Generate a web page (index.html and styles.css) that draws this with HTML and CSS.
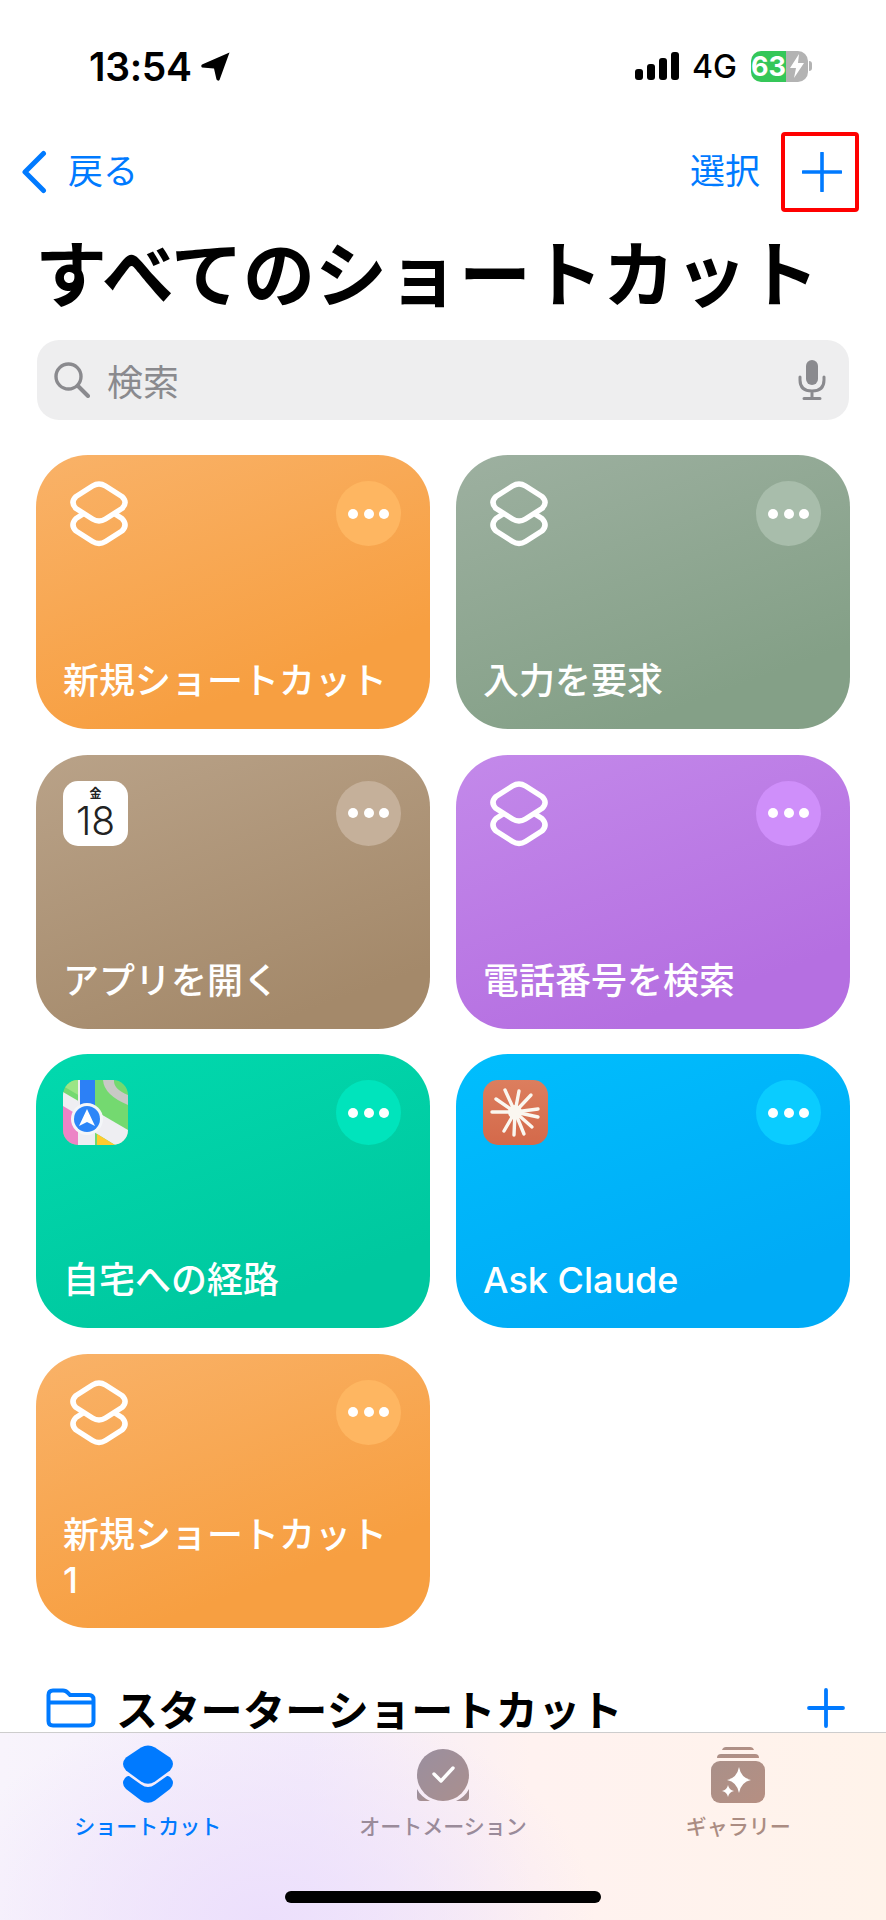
FILE: index.html
```html
<!DOCTYPE html>
<html lang="ja">
<head>
    <meta charset="UTF-8">
    <meta name="viewport" content="width=device-width, initial-scale=1.0">
    <title>すべてのショートカット</title>
    <link rel="stylesheet" href="styles.css">
</head>
<body>
    <svg class="sprites" width="0" height="0">
        <symbol id="stack" viewBox="0 0 58 66">
            <path d="M22.5 5 Q29 1 35.5 5 L52 15.5 Q58 21.5 52 27.5 L35.5 38 Q29 42 22.5 38 L6 27.5 Q0 21.5 6 15.5 Z" fill="none" stroke="#fff" stroke-width="5.4"/>
            <path d="M13 33 L6 37.5 Q0 44 6 50 L22.5 60.5 Q29 64.5 35.5 60.5 L52 50 Q58 44 52 37.5 L45 33" fill="none" stroke="#fff" stroke-width="5.4"/>
        </symbol>
    </svg>

    <div class="status-bar">
        <div class="status-left">
            <span class="clock">13:54</span>
            <svg class="location" viewBox="0 0 29 29"><path d="M28.5 0.5 L18.5 28 Q17 29.5 15.5 27.5 L13 16.5 L1 15.5 Q-0.5 14 1 12.5 Z" fill="#000"/></svg>
        </div>
        <div class="status-right">
            <div class="signal"><i class="bar-1"></i><i class="bar-2"></i><i class="bar-3"></i><i class="bar-4"></i></div>
            <span class="network">4G</span>
            <div class="battery">
                <div class="battery-level">63</div>
                <div class="battery-rest">
                    <svg class="bolt" viewBox="0 0 14 24"><path d="M9 0 L0 14 L6 14 L4 24 L14 9 L8 9 Z" fill="#fff"/></svg>
                </div>
            </div>
            <div class="battery-nub"></div>
        </div>
    </div>

    <div class="nav-bar">
        <a class="back-link">
            <svg class="chevron" viewBox="0 0 26 44"><path d="M22.5 3.5 L4 22 L22.5 40.5" fill="none" stroke="#007aff" stroke-width="5" stroke-linecap="round" stroke-linejoin="round"/></svg>
            <span class="nav-text">戻る</span>
        </a>
        <div class="nav-actions">
            <a class="nav-text">選択</a>
            <div class="add-box">
                <svg class="plus" viewBox="0 0 40 40"><path d="M20 1 V39 M1 20 H39" fill="none" stroke="#007aff" stroke-width="3.6" stroke-linecap="round"/></svg>
            </div>
        </div>
    </div>

    <h1 class="page-title">すべてのショートカット</h1>

    <div class="search-bar">
        <svg class="search-icon" viewBox="0 0 36 36"><circle cx="14.5" cy="14.5" r="12.5" fill="none" stroke="#8a8a8e" stroke-width="3.4"/><path d="M24 24 L34 34" stroke="#8a8a8e" stroke-width="4" stroke-linecap="round"/></svg>
        <span class="search-text">検索</span>
        <svg class="mic-icon" viewBox="0 0 28 40"><rect x="8" y="0" width="12" height="25" rx="6" fill="#8a8a8e"/><path d="M2 17 V20 Q2 31 14 31 Q26 31 26 20 V17 M14 31 V38 M6 38.5 H22" fill="none" stroke="#8a8a8e" stroke-width="3" stroke-linecap="round"/></svg>
    </div>

    <div class="shortcut-grid">
        <div class="card card-orange">
            <div class="card-top">
                <svg class="card-icon"><use href="#stack"/></svg>
                <div class="more-btn"><i></i><i></i><i></i></div>
            </div>
            <div class="card-name">新規ショートカット</div>
        </div>
        <div class="card card-green">
            <div class="card-top">
                <svg class="card-icon"><use href="#stack"/></svg>
                <div class="more-btn"><i></i><i></i><i></i></div>
            </div>
            <div class="card-name">入力を要求</div>
        </div>
        <div class="card card-brown">
            <div class="card-top">
                <div class="app-icon calendar">
                    <span class="cal-day">金</span>
                    <span class="cal-date">18</span>
                </div>
                <div class="more-btn"><i></i><i></i><i></i></div>
            </div>
            <div class="card-name">アプリを開く</div>
        </div>
        <div class="card card-purple">
            <div class="card-top">
                <svg class="card-icon"><use href="#stack"/></svg>
                <div class="more-btn"><i></i><i></i><i></i></div>
            </div>
            <div class="card-name">電話番号を検索</div>
        </div>
        <div class="card card-teal">
            <div class="card-top">
                <svg class="app-icon" viewBox="0 0 65 65">
                    <rect width="65" height="65" fill="#74d970"/>
                    <path d="M0 0 H17 V16 L0 6 Z" fill="#9be585"/>
                    <path d="M40 0 Q41 15 65 25 V15 Q50 9 51 0 Z" fill="#c9c9c6"/>
                    <path d="M0 12 L65 50 V64 L52 65 L0 33 Z" fill="#eeeef2"/>
                    <path d="M0 26 L15 35 V65 H0 Z" fill="#ec84c6"/>
                    <rect x="15" y="0" width="17" height="65" fill="#eeeef2"/>
                    <path d="M34 54 L52 65 H34 Z" fill="#ffcb2e"/>
                    <rect x="17" y="0" width="15" height="30" fill="#2c80f6"/>
                    <circle cx="24" cy="39" r="16" fill="#f4f6f8"/>
                    <circle cx="24" cy="39" r="13" fill="#2c86f8"/>
                    <path d="M24 29 L32 46 L24 42 L16 46 Z" fill="#fff"/>
                </svg>
                <div class="more-btn"><i></i><i></i><i></i></div>
            </div>
            <div class="card-name">自宅への経路</div>
        </div>
        <div class="card card-blue">
            <div class="card-top">
                <svg class="app-icon claude" viewBox="0 0 65 65">
                    <g stroke="#faf7f0" stroke-width="3.4" stroke-linecap="round">
                        <path d="M32 32 L22 10"/>
                        <path d="M32 32 L36 11"/>
                        <path d="M32 32 L48 15"/>
                        <path d="M32 32 L55 29"/>
                        <path d="M32 32 L55 37"/>
                        <path d="M32 32 L49 47"/>
                        <path d="M32 32 L41 54"/>
                        <path d="M32 32 L31 55"/>
                        <path d="M32 32 L21 51"/>
                        <path d="M32 32 L9 32"/>
                        <path d="M32 32 L13 19"/>
                    </g>
                    <circle cx="32" cy="32" r="7" fill="#faf7f0"/>
                </svg>
                <div class="more-btn"><i></i><i></i><i></i></div>
            </div>
            <div class="card-name">Ask Claude</div>
        </div>
        <div class="card card-orange">
            <div class="card-top">
                <svg class="card-icon"><use href="#stack"/></svg>
                <div class="more-btn"><i></i><i></i><i></i></div>
            </div>
            <div class="card-name">新規ショートカット<br>1</div>
        </div>
    </div>

    <div class="section-header">
        <svg class="folder-icon" viewBox="0 0 50 40"><path d="M2.5 7 Q2.5 2.5 7 2.5 H17 Q20 2.5 22 5 L24 7 H43 Q47.5 7 47.5 11.5 V33 Q47.5 37.5 43 37.5 H7 Q2.5 37.5 2.5 33 Z M2.5 14.5 H47.5" fill="none" stroke="#007aff" stroke-width="4"/></svg>
        <h2 class="section-title">スターターショートカット</h2>
        <svg class="section-plus" viewBox="0 0 38 40"><path d="M19 2 V38 M2 20 H36" fill="none" stroke="#007aff" stroke-width="3.8" stroke-linecap="round"/></svg>
    </div>

    <div class="tab-bar">
        <div class="tabs">
            <div class="tab tab-active">
                <svg class="tab-icon" viewBox="0 0 52 60">
                    <path d="M19 2.5 Q26 -1.5 33 2.5 L48 12.5 Q54 19 48 25.5 L33 36.5 Q26 41 19 36.5 L4 25.5 Q-2 19 4 12.5 Z" fill="#007aff"/>
                    <path d="M7 31 L19 39.5 Q26 44.5 33 39.5 L45 31 Q46 30.5 48 32 Q54 38 48 44 L33 55.5 Q26 60 19 55.5 L4 44 Q-2 38 4 32 Q6 30.5 7 31 Z" fill="#007aff"/>
                </svg>
                <span class="tab-label">ショートカット</span>
            </div>
            <div class="tab tab-auto">
                <svg class="tab-icon" viewBox="0 0 54 60">
                    <defs>
                        <linearGradient id="autoFill" x1="0" y1="0" x2="1" y2="1"><stop offset="0" stop-color="#9a8f9f"/><stop offset="1" stop-color="#aa8f8e"/></linearGradient>
                    </defs>
                    <g transform="translate(0 4)">
                        <circle cx="27" cy="26" r="26" fill="url(#autoFill)"/>
                        <path d="M18 25 L25 32 L37 19" fill="none" stroke="#fff" stroke-width="3.4" stroke-linecap="round" stroke-linejoin="round"/>
                        <path d="M1 40 Q5 48 14 52 H5 Q1 52 1 48 Z" fill="url(#autoFill)"/>
                        <path d="M53 40 Q49 48 40 52 H49 Q53 52 53 48 Z" fill="url(#autoFill)"/>
                    </g>
                </svg>
                <span class="tab-label">オートメーション</span>
            </div>
            <div class="tab tab-gallery">
                <svg class="tab-icon" viewBox="0 0 54 60">
                    <defs>
                        <linearGradient id="galleryFill" x1="0" y1="0" x2="1" y2="1"><stop offset="0" stop-color="#a99089"/><stop offset="1" stop-color="#b68f82"/></linearGradient>
                    </defs>
                    <path d="M11 5 Q12 2 15 2 H39 Q42 2 43 5 Z" fill="url(#galleryFill)"/>
                    <path d="M6 13 Q6 9 10 9 H44 Q48 9 48 13 Z" fill="url(#galleryFill)"/>
                    <rect x="0" y="16" width="54" height="42" rx="9" fill="url(#galleryFill)"/>
                    <path d="M28 22 Q30 33 40 35 Q30 37 28 48 Q26 37 16 35 Q26 33 28 22 Z" fill="#fff"/>
                    <path d="M17 40 Q18 45 23 46 Q18 47 17 52 Q16 47 11 46 Q16 45 17 40 Z" fill="#fff"/>
                </svg>
                <span class="tab-label">ギャラリー</span>
            </div>
        </div>
        <div class="home-indicator"></div>
    </div>
</body>
</html>
```
FILE: styles.css
```css
html, body {
    height: 100%;
}
body {
    position: relative;
    margin: 0;
    overflow: hidden;
    background-color: #fff;
    color: #000;
    font-family: "Noto Sans CJK JP", "Noto Sans", sans-serif;
}
.sprites {
    position: absolute;
}

.status-bar {
    display: flex;
    justify-content: space-between;
    height: 132px;
    box-sizing: border-box;
    padding: 50px 74px 0 89px;
    font-family: Inter, "Liberation Sans", sans-serif;
}
.status-left, .status-right {
    display: flex;
    align-items: center;
    height: 32px;
}
.clock {
    font-size: 39px;
    font-weight: 600;
    letter-spacing: -0.3px;
}
.location {
    width: 29px;
    height: 29px;
    margin-left: 9px;
}
.signal {
    display: flex;
    align-items: flex-end;
    gap: 4px;
    height: 28px;
}
.signal i {
    display: block;
    width: 8px;
    background-color: #000;
    border-radius: 3px;
}
.bar-1 { height: 11px; }
.bar-2 { height: 16px; }
.bar-3 { height: 22px; }
.bar-4 { height: 28px; }
.network {
    margin-left: 13px;
    font-size: 32px;
    font-weight: 500;
}
.battery {
    display: flex;
    width: 57px;
    height: 31px;
    margin-left: 14px;
    border-radius: 10px;
    overflow: hidden;
}
.battery-level {
    width: 35px;
    background-color: #35c759;
    color: #fff;
    font-size: 27px;
    font-weight: 700;
    line-height: 31px;
    text-align: right;
}
.battery-rest {
    display: flex;
    flex: 1;
    align-items: center;
    justify-content: center;
    background-color: #b3b3b3;
}
.bolt {
    width: 14px;
    height: 24px;
}
.battery-nub {
    width: 3px;
    height: 10px;
    margin-left: 1px;
    background-color: #b3b3b3;
    border-radius: 0 3px 3px 0;
}

.nav-bar {
    display: flex;
    justify-content: space-between;
    align-items: center;
    height: 80px;
    padding: 0 27px 0 21px;
    color: #007aff;
    font-size: 35px;
}
.back-link {
    display: flex;
    align-items: center;
    gap: 21px;
}
.nav-text {
    padding-bottom: 6px;
    line-height: 50px;
}
.chevron {
    width: 26px;
    height: 44px;
}
.nav-actions {
    display: flex;
    align-items: center;
    gap: 21px;
}
.add-box {
    display: flex;
    align-items: center;
    justify-content: center;
    width: 78px;
    height: 80px;
    box-sizing: border-box;
    padding-left: 4px;
    border: 4px solid #f00;
    border-radius: 4px;
}
.plus {
    width: 40px;
    height: 40px;
}

.page-title {
    margin: 0;
    padding: 0 0 12px 35px;
    font-size: 72px;
    font-weight: 700;
    line-height: 116px;
    white-space: nowrap;
}

.search-bar {
    display: flex;
    align-items: center;
    height: 80px;
    margin: 0 37px;
    padding: 0 23px 0 17px;
    background-color: #eeeeef;
    border-radius: 22px;
}
.search-icon {
    width: 36px;
    height: 36px;
}
.search-text {
    flex: 1;
    margin-left: 17px;
    color: #8a8a8e;
    font-size: 36px;
    line-height: 50px;
}
.mic-icon {
    width: 28px;
    height: 40px;
}

.shortcut-grid {
    display: grid;
    grid-template-columns: 394px 394px;
    grid-auto-rows: 274px;
    gap: 25.5px 26px;
    margin: 35px 36px 0;
}
.card {
    display: flex;
    flex-direction: column;
    justify-content: space-between;
    box-sizing: border-box;
    padding: 26px 29px 25px 27px;
    border-radius: 52px;
    color: #fff;
}
.card-orange { background: linear-gradient(160deg, #f9b268, #f79f41 75%); }
.card-green { background: linear-gradient(160deg, #9db0a0, #84a087 80%); }
.card-brown { background: linear-gradient(160deg, #b9a288, #a4896a 85%); }
.card-purple { background: linear-gradient(160deg, #c389ea, #b56fe1 80%); }
.card-teal { background: linear-gradient(160deg, #01d9ae, #00c89f 80%); }
.card-blue { background: linear-gradient(160deg, #00befd, #00abf6 80%); }
.card-top {
    display: flex;
    justify-content: space-between;
    align-items: flex-start;
}
.card-icon {
    width: 58px;
    height: 66px;
    margin-left: 7px;
}
.app-icon {
    width: 65px;
    height: 65px;
    border-radius: 15px;
}
.calendar {
    display: flex;
    flex-direction: column;
    align-items: center;
    background-color: #fff;
    color: #222;
}
.cal-day {
    margin-top: 4px;
    font-size: 12px;
    font-weight: 700;
    line-height: 15px;
}
.cal-date {
    font-family: Inter, "Liberation Sans", sans-serif;
    font-size: 39px;
    font-weight: 300;
    line-height: 42px;
}
.claude {
    background: linear-gradient(180deg, #dc7e5e, #d4694a);
}
.more-btn {
    display: flex;
    align-items: center;
    justify-content: center;
    gap: 5.5px;
    width: 65px;
    height: 65px;
    border-radius: 50%;
}
.card-orange .more-btn { background-color: #feb661; }
.card-green .more-btn { background-color: #a8bdab; }
.card-brown .more-btn { background-color: #c5b09a; }
.card-purple .more-btn { background-color: #cf8ffa; }
.card-teal .more-btn { background-color: #00e4bc; }
.card-blue .more-btn { background-color: #0accff; }
.more-btn i {
    display: block;
    width: 10px;
    height: 10px;
    background-color: #fff;
    border-radius: 50%;
}
.card-name {
    font-family: Inter, "Noto Sans CJK JP", sans-serif;
    font-size: 36px;
    font-weight: 500;
    line-height: 45px;
    white-space: nowrap;
}

.section-header {
    display: flex;
    align-items: center;
    margin-top: 50px;
    padding: 0 41px 0 46px;
}
.folder-icon {
    width: 50px;
    height: 40px;
}
.section-title {
    flex: 1;
    margin: 0 0 0 20px;
    font-size: 42px;
    font-weight: 700;
    letter-spacing: 0.3px;
    line-height: 60px;
}
.section-plus {
    width: 38px;
    height: 40px;
}

.tab-bar {
    position: absolute;
    left: 0;
    right: 0;
    bottom: 0;
    display: flex;
    flex-direction: column;
    align-items: center;
    height: 188px;
    box-sizing: border-box;
    border-top: 1px solid #cdcdcd;
    background:
        radial-gradient(ellipse 330px 220px at 30% 100%, #ecdffc, rgba(236, 223, 252, 0)),
        linear-gradient(90deg, #f8f4fc, #f4ecfb 35%, #fff2f0 60%, #fff3ea);
}
.tabs {
    display: grid;
    grid-template-columns: repeat(3, 1fr);
    width: 100%;
    padding-top: 12px;
}
.tab {
    display: flex;
    flex-direction: column;
    align-items: center;
}
.tab-icon {
    width: 54px;
    height: 60px;
}
.tab-label {
    margin-top: 5px;
    font-size: 21px;
    font-weight: 500;
    line-height: 30px;
}
.tab-active .tab-label { color: #007aff; }
.tab-auto .tab-label { color: #9a8b9a; }
.tab-gallery .tab-label { color: #ab8c82; }
.home-indicator {
    width: 316px;
    height: 12px;
    margin-top: auto;
    margin-bottom: 17px;
    background-color: #000;
    border-radius: 6px;
}
```
